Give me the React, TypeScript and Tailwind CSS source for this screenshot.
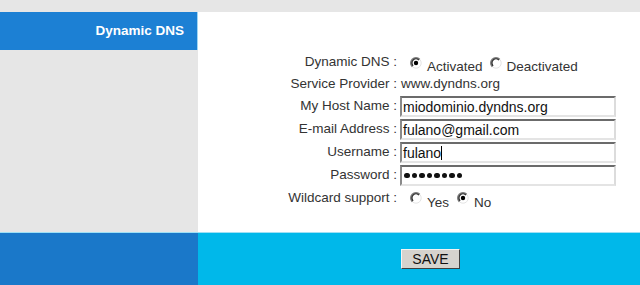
import React from "react";

function Radio({ checked }: { checked: boolean }) {
  return (
    <svg width="12" height="12" viewBox="0 0 12 12" className="shrink-0">
      <circle cx="6" cy="6" r="5.2" fill="#ffffff" stroke="#e4e4e4" strokeWidth="1" />
      <path d="M2.3 9.7 A5.2 5.2 0 0 1 9.7 2.3" fill="none" stroke="#7a7a7a" strokeWidth="1.5" />
      <path d="M3.1 8.9 A4 4 0 0 1 8.9 3.1" fill="none" stroke="#262626" strokeWidth="1.3" />
      {checked && <circle cx="6" cy="6" r="2.2" fill="#000000" />}
    </svg>
  );
}

function Label({ children }: { children: React.ReactNode }) {
  return <div className="w-[202px] text-right pr-[3px] whitespace-nowrap">{children}</div>;
}

function TextInput({ value, cursor, password }: { value: string; cursor?: boolean; password?: boolean }) {
  return (
    <div className="w-[216px] h-[21px] border-2 border-t-[#6b6b6b] border-l-[#8a8a8a] border-b-[#e4e4e4] border-r-[#dcdcdc] bg-white flex items-center pl-[1px] text-[14px] text-[#111] leading-none">
      {password ? (
        <div className="flex items-center gap-[2px] pl-[1px]">
          {Array.from({ length: 8 }).map((_, i) => (
            <div key={i} className="w-[5.5px] h-[5.5px] rounded-full bg-[#111]" />
          ))}
        </div>
      ) : (
        <span>{value}</span>
      )}
      {cursor && <span className="w-px h-[14px] bg-black" />}
    </div>
  );
}

export default function App() {
  return (
    <div
      className="w-[640px] h-[285px] flex flex-col overflow-hidden text-[13.5px] text-[#333]"
      style={{ fontFamily: '"Liberation Sans", Arial, sans-serif' }}
    >
      <div className="h-[12px] bg-[#e6e6e6]" />
      <div className="h-[220px] flex">
        <div className="w-[198px] bg-[#e6e6e6] flex flex-col">
          <div className="h-[38px] bg-[#1c80d4] flex items-center justify-end pr-[13px] text-white font-bold text-[13.5px] border-r border-[#9fd6f3]">
            Dynamic DNS
          </div>
        </div>
        <div className="flex-1 bg-white flex flex-col pt-[40px]">
          <div className="h-[21px] flex items-center">
            <Label>Dynamic DNS :</Label>
            <div className="flex items-center ml-[10px]">
              <Radio checked />
              <span className="ml-[5px] mt-[9px]">Activated</span>
              <div className="ml-[7px]"><Radio checked={false} /></div>
              <span className="ml-[5px] mt-[9px]">Deactivated</span>
            </div>
          </div>
          <div className="h-[22px] flex items-center">
            <Label>Service Provider :</Label>
            <span className="ml-[1px]">www.dyndns.org</span>
          </div>
          <div className="h-[23px] flex items-center">
            <Label>My Host Name :</Label>
            <TextInput value="miodominio.dyndns.org" />
          </div>
          <div className="h-[23px] flex items-center">
            <Label>E-mail Address :</Label>
            <TextInput value="fulano@gmail.com" />
          </div>
          <div className="h-[23px] flex items-center">
            <Label>Username :</Label>
            <TextInput value="fulano" cursor />
          </div>
          <div className="h-[23px] flex items-center">
            <Label>Password :</Label>
            <TextInput value="" password />
          </div>
          <div className="h-[22px] flex items-center">
            <Label>Wildcard support :</Label>
            <div className="flex items-center ml-[10px]">
              <Radio checked={false} />
              <span className="ml-[5px] mt-[10px]">Yes</span>
              <div className="ml-[8px]"><Radio checked /></div>
              <span className="ml-[5px] mt-[10px]">No</span>
            </div>
          </div>
        </div>
      </div>
      <div className="h-[53px] flex border-t border-[#9fe0f5]">
        <div className="w-[198px] bg-[#1a78c9]" />
        <div className="flex-1 bg-[#00b8ea] pt-[16px] pl-[203px]">
          <button className="w-[59px] h-[20px] bg-[#d6d3ce] border border-t-[#f4f4f4] border-l-[#f4f4f4] border-b-[#404040] border-r-[#404040] text-[14px] text-[#111] leading-none flex items-center justify-center">
            SAVE
          </button>
        </div>
      </div>
    </div>
  );
}
